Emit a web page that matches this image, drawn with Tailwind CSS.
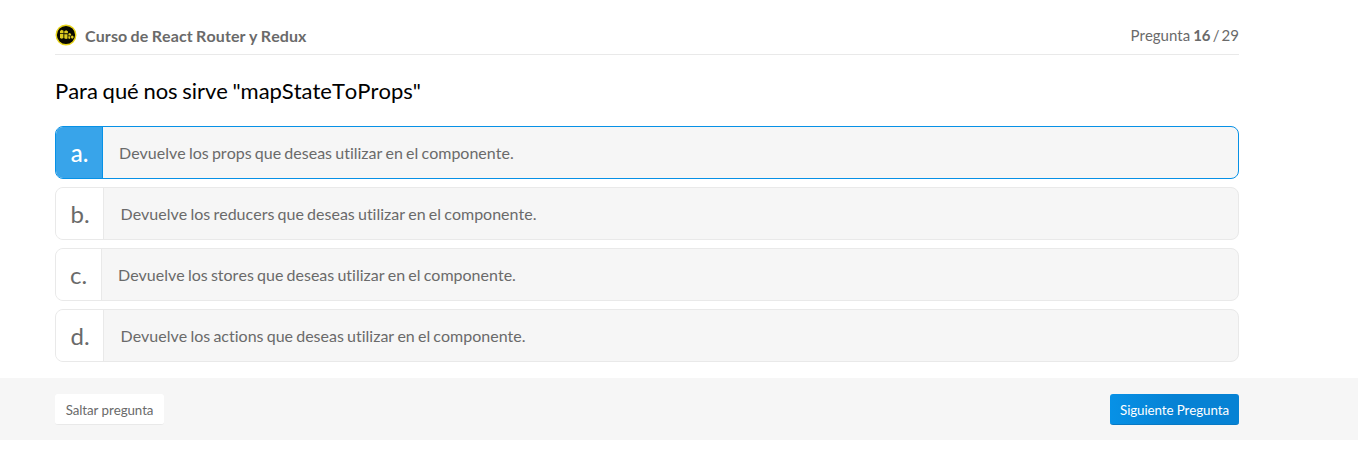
<!DOCTYPE html>
<html lang="es"><head><meta charset="utf-8"><title>Curso de React Router y Redux</title>
<script src="https://cdn.jsdelivr.net/npm/@tailwindcss/browser@4"></script></head>
<body class="h-[456px] overflow-hidden bg-white font-['Lato',sans-serif] text-base text-[#6a6a6a] [font-kerning:none] [font-variant-ligatures:none] [word-spacing:-0.9px]">
<main class="ml-[55px] w-[1184px] pt-[19px]">
<header class="flex h-9 items-center justify-between border-b border-[#e9e9e9] pb-[3px]">
<div class="flex items-center gap-2"><svg class="h-[22px] w-[22px]" viewBox="0 0 22 22"><circle cx="11" cy="11" r="9.8" fill="#090900" stroke="#e9d51b" stroke-width="1.4"/><g fill="#ddca20"><path d="M5 6.9 6.7 5.7 8.5 6.7v2.5H5z"/><path d="m9.3 7.2 1.8-.9 1.8 1v2H9.3z"/><path d="M5 10h3.4v4l-1.7.8L5 13.9z"/><path d="M9.3 10.2h3.2v4.2l-1.5.6-1.7-.8z"/><path d="m13.4 9.7 1.4-.6 1.3.8v1.5h-2.7z"/><path d="M13.3 12.2h2v2.1l-1 .6-1-.6z"/><path d="m16.1 12.1 1.1-.6 1.3.7v1.8l-1.3.7-1.1-.6z"/></g></svg><h1 class="pt-0.5 font-bold tracking-[0.1px] [word-spacing:-0.7px]">Curso de React Router y Redux</h1></div>
<p class="text-[15px]">Pregunta <b>16</b><span class="[word-spacing:-1.7px]"> / 29</span></p>
</header>
<h2 class="mt-5 h-8 text-[22px] leading-8 tracking-[-0.04px] text-black">Para qué nos sirve "mapStateToProps"</h2>
<ul class="mt-[19px] flex flex-col gap-2">
<li class="flex h-[53px] overflow-hidden rounded-lg border border-[#0791e6] bg-[#f6f6f6]"><span class="flex w-[47px] items-center justify-center border-r border-[#0791e6] bg-[#38a4ea] pl-px text-2xl font-medium text-white">a.</span><span class="flex items-center pl-4">Devuelve los props que deseas utilizar en el componente.</span></li>
<li class="flex h-[53px] overflow-hidden rounded-lg border border-[#e9e9e9] bg-[#f6f6f6]"><span class="flex w-12 items-center justify-center border-r border-[#e9e9e9] bg-white pl-px text-2xl">b.</span><span class="flex items-center pl-[16.5px]">Devuelve los reducers que deseas utilizar en el componente.</span></li>
<li class="flex h-[53px] overflow-hidden rounded-lg border border-[#e9e9e9] bg-[#f6f6f6]"><span class="flex w-[46px] items-center justify-center border-r border-[#e9e9e9] bg-white text-2xl">c.</span><span class="flex items-center pl-4">Devuelve los stores que deseas utilizar en el componente.</span></li>
<li class="flex h-[53px] overflow-hidden rounded-lg border border-[#e9e9e9] bg-[#f6f6f6]"><span class="flex w-12 items-center justify-center border-r border-[#e9e9e9] bg-white pl-px text-2xl">d.</span><span class="flex items-center pl-[16.5px]">Devuelve los actions que deseas utilizar en el componente.</span></li>
</ul></main>
<footer class="mt-4 h-[62px] bg-[#f6f6f6] pl-[55px] pt-4"><div class="flex w-[1184px] justify-between text-[13.33px] tracking-[-0.1px]"><button class="h-[31px] w-[109px] whitespace-nowrap rounded-[3px] border-b border-[#e9e9e9] bg-white pt-[3px]">Saltar pregunta</button><button class="h-[31px] w-[129px] whitespace-nowrap rounded-[3px] border-b border-[#0879c4] bg-linear-to-r from-[#0791e6] to-[#0682d4] to-50% pt-[3px] text-white">Siguiente Pregunta</button></div></footer>
</body></html>
